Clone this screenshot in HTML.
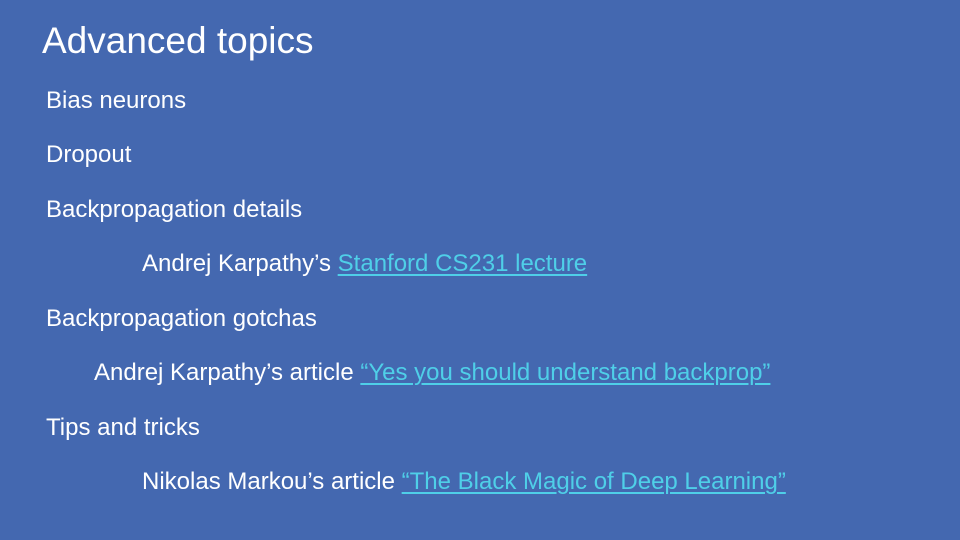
<!DOCTYPE html>
<html><head><style>
body{margin:0;width:960px;height:540px;background:#4468B0;overflow:hidden;font-family:"Liberation Sans",Arial,sans-serif;color:#fff;position:relative}
div{position:absolute;white-space:nowrap;font-size:24px;line-height:24px}
.t{font-size:37px;line-height:37px;left:42px;top:22px}
a{color:#4FCFE8;text-decoration:underline;text-decoration-thickness:2px;text-underline-offset:3px}
</style></head><body>
<div class="t">Advanced topics</div>
<div style="left:46px;top:89px">Bias neurons</div>
<div style="left:46px;top:143px">Dropout</div>
<div style="left:46px;top:198px">Backpropagation details</div>
<div style="left:142px;top:252px">Andrej Karpathy’s <a>Stanford CS231 lecture</a></div>
<div style="left:46px;top:307px">Backpropagation gotchas</div>
<div style="left:94px;top:361px">Andrej Karpathy’s article <a>“Yes you should understand backprop”</a></div>
<div style="left:46px;top:416px">Tips and tricks</div>
<div style="left:142px;top:470px">Nikolas Markou’s article <a>“The Black Magic of Deep Learning”</a></div>
</body></html>
